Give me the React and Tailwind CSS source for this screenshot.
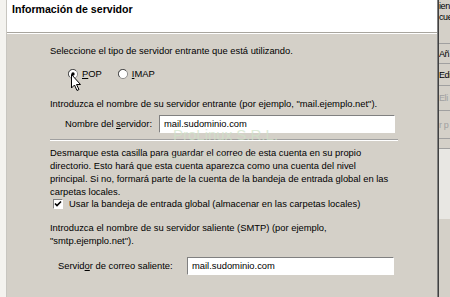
import React from "react";

function Radio({ checked }) {
  return (
    <svg width="10" height="10" viewBox="0 0 12 12" className="shrink-0">
      <circle cx="6" cy="6" r="5.5" fill="#ffffff" stroke="#808080" />
      <path d="M2 9.5 A5 5 0 0 1 9.5 2" fill="none" stroke="#404040" strokeWidth="1" />
      {checked && <circle cx="6" cy="6" r="2" fill="#000" />}
    </svg>
  );
}

function Box({ value, w }) {
  return (
    <div
      className={`h-[18px] ${w} bg-white border-t border-l border-[#808080] border-r border-b border-r-[#ffffff] border-b-[#ffffff] flex items-center pl-[4px]`}
    >
      <span>{value}</span>
    </div>
  );
}

export default function App() {
  return (
    <div
      className="w-[450px] h-[297px] flex overflow-hidden text-[9.4px] leading-[10px] text-black bg-[#d4d0c8]"
      style={{ fontFamily: '"Liberation Sans", Arial, sans-serif' }}
    >
      <div className="w-[7px] h-full bg-[#f4f3ef] border-r border-[#c8c6c0] shrink-0" />
      <div className="w-[430px] flex flex-col shrink-0">
        <div className="h-[33px] bg-white border-b border-[#a8a59e] shrink-0 pl-[5px] pt-[4px]">
          <span className="font-bold text-[10.6px] leading-[10px]">Información de servidor</span>
        </div>
        <div className="relative flex-1 flex flex-col pl-[43px] border-t border-white">
          <div className="mt-[12px]">Seleccione el tipo de servidor entrante que está utilizando.</div>
          <div className="mt-[13px] flex items-center h-[10px] pl-[18px]">
            <Radio checked />
            <span className="ml-[4px]"><u>P</u>OP</span>
            <span className="ml-[16px]"><Radio /></span>
            <span className="ml-[4px]"><u>I</u>MAP</span>
          </div>
          <div className="mt-[20px]">Introduzca el nombre de su servidor entrante (por ejemplo, "mail.ejemplo.net").</div>
          <div className="mt-[6px] flex items-center pl-[15px]">
            <span className="w-[94px]">Nombre del <u>s</u>ervidor:</span>
            <Box value="mail.sudominio.com" w="w-[236px]" />
          </div>
          <div className="mt-[6px] w-[348px] h-[2px] border-t border-[#a0a0a0] border-b border-b-white" />
          <div className="mt-[5px] leading-[13px]">
            Desmarque esta casilla para guardar el correo de esta cuenta en su propio<br />
            directorio. Esto hará que esta cuenta aparezca como una cuenta del nivel<br />
            principal. Si no, formará parte de la cuenta de la bandeja de entrada global en las<br />
            carpetas locales.
          </div>
          <div className="mt-[1px] flex items-center h-[10px] pl-[3px]">
            <div className="w-[10px] h-[10px] bg-white border-t border-l border-[#808080] border-r border-b border-r-white border-b-white flex items-center justify-center shrink-0">
              <svg width="8" height="8" viewBox="0 0 8 8">
                <path d="M1 3.5 L3 5.5 L7 1.5" fill="none" stroke="#000" strokeWidth="1.6" />
              </svg>
            </div>
            <span className="ml-[6px]">Usar la bandeja de entrada global (almacenar en las carpetas locales)</span>
          </div>
          <div className="mt-[12px] leading-[13px]">
            Introduzca el nombre de su servidor saliente (SMTP) (por ejemplo,<br />
            "smtp.ejemplo.net").
          </div>
          <div className="mt-[10px] flex items-center pl-[8px]">
            <span className="w-[129px]">Servid<u>o</u>r de correo saliente:</span>
            <Box value="mail.sudominio.com" w="w-[207px]" />
          </div>

          <div className="absolute left-[166px] top-[93px] text-[15px] leading-[15px] text-[#cfe3c8] opacity-70 pointer-events-none">
            ProLinux S.R.L.
          </div>
          <div className="absolute left-[150px] top-[118px] text-[11px] leading-[11px] text-[#cfe0c8] opacity-50 pointer-events-none">
            www.proLinux.net.uy
          </div>

          <svg className="absolute left-[64px] top-[40px]" width="11" height="18" viewBox="0 0 11 18">
            <path d="M0.5 0.5 L0.5 14 L3.5 11 L6 16.5 L8 15.5 L5.5 10.5 L9.5 10.5 Z" fill="#fff" stroke="#000" strokeWidth="1" strokeLinejoin="miter" />
          </svg>
        </div>
      </div>
      <div className="w-[2px] h-full bg-[#808080] border-r border-[#404040] shrink-0" />
      <div className="flex-1 flex flex-col overflow-hidden whitespace-nowrap bg-[#d4d0c8] text-[9px] tracking-[-0.4px]">
        <div className="h-[43px] pt-[1px] leading-[11px]">
          <div>ien</div>
          <div>cue</div>
        </div>
        <div className="h-[20px] border-t border-[#a0a0a0] flex items-center">Añ</div>
        <div className="h-[22px] border-t border-[#a0a0a0] flex items-center">Edi</div>
        <div className="h-[25px] border-t border-[#a0a0a0] flex items-center text-[#a0a0a0]">Eli</div>
        <div className="h-[28px] border-t border-[#a0a0a0] flex items-center text-[#a0a0a0]">r p</div>
        <div className="h-[10px] border-t border-[#a0a0a0]" />
        <div className="h-[71px] border-t border-[#a0a0a0] bg-[#e8e7e3]" />
      </div>
    </div>
  );
}
